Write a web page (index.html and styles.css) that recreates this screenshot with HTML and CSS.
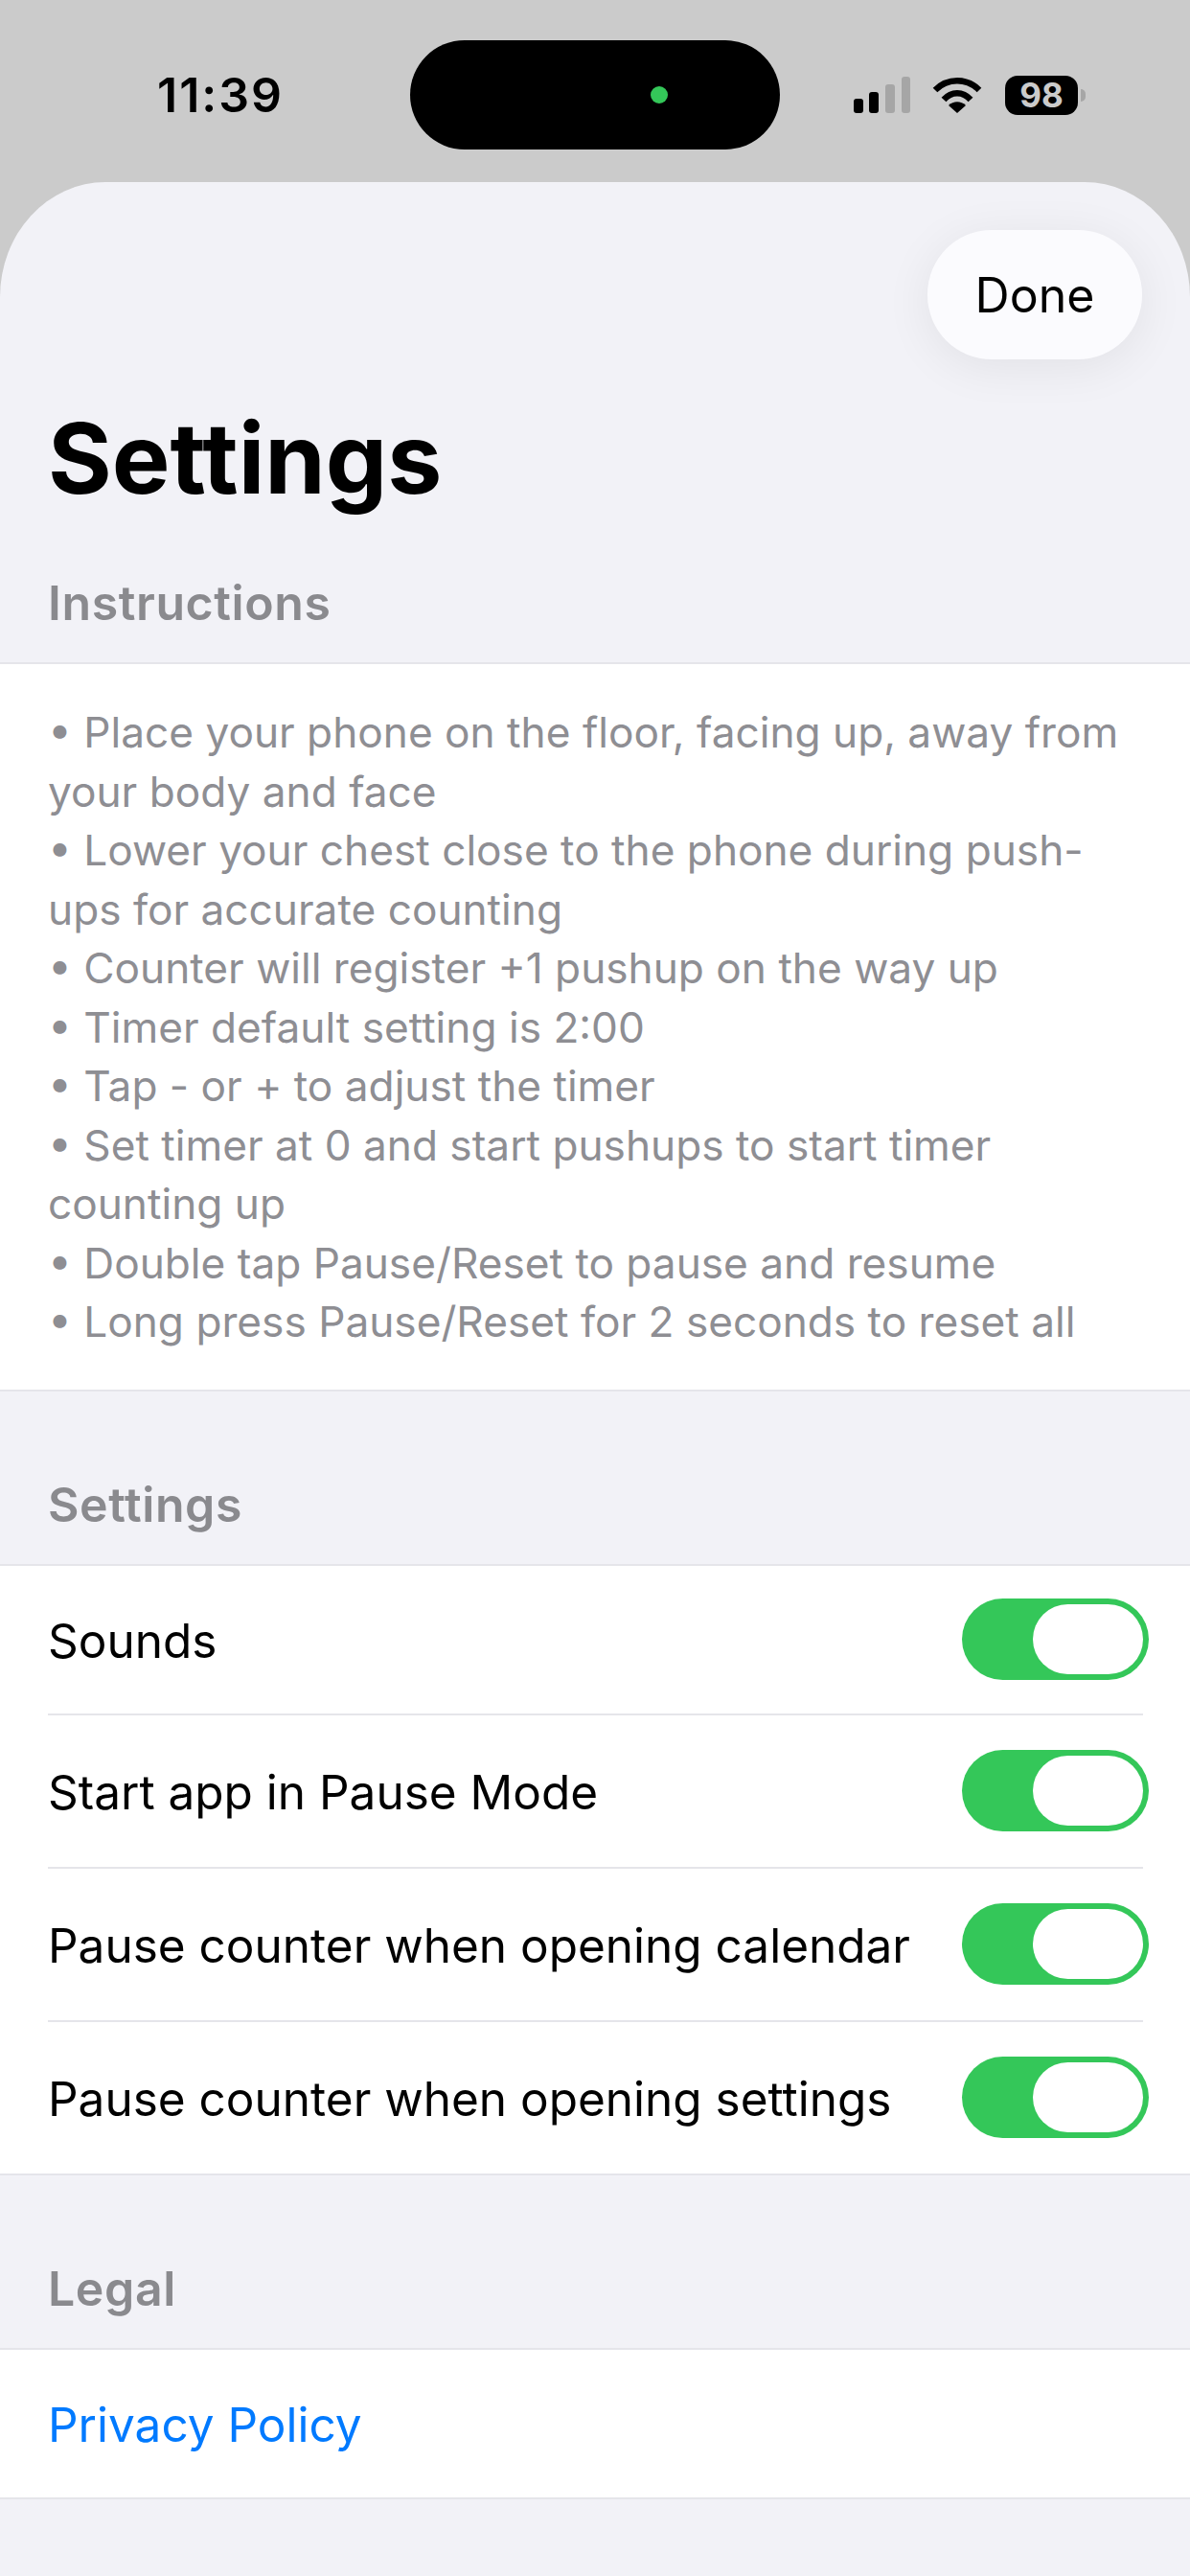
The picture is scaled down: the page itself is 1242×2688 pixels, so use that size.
FILE: index.html
```html
<!DOCTYPE html>
<html lang="en">
<head>
    <meta charset="UTF-8">
    <meta name="viewport" content="width=device-width, initial-scale=1.0">
    <title>Settings</title>
    <link rel="stylesheet" href="styles.css">
</head>
<body>
    <div class="status-bar">
        <span class="time">11:39</span>
        <div class="island"><span class="island-dot"></span></div>
        <div class="status-icons">
            <svg class="signal" width="59" height="38" viewBox="0 0 59 38">
                <rect x="0" y="23" width="10" height="15" rx="3" fill="#000"/>
                <rect x="16" y="16" width="10" height="22" rx="3" fill="#000"/>
                <rect x="33" y="8" width="10" height="30" rx="3" fill="#a6a6a6"/>
                <rect x="50" y="0" width="9" height="38" rx="3" fill="#a6a6a6"/>
            </svg>
            <svg class="wifi" width="52" height="38" viewBox="0 0 52 38">
                <path d="M3 14 C16 1 36 1 49 14" fill="none" stroke="#000" stroke-width="6.5"/>
                <path d="M12 24 C20 15 32 15 40 24" fill="none" stroke="#000" stroke-width="6.5"/>
                <path d="M26 38 L17 30 C22 25 30 25 35 30 Z" fill="#000"/>
            </svg>
            <div class="battery"><span class="battery-level">98</span></div>
            <span class="battery-nub"></span>
        </div>
    </div>

    <div class="sheet">
        <button class="done-button">Done</button>
        <h1 class="title">Settings</h1>

        <h2 class="section-label">Instructions</h2>
        <div class="group instructions">
            <p>• Place your phone on the floor, facing up, away from your body and face</p>
            <p>• Lower your chest close to the phone during push-ups for accurate counting</p>
            <p>• Counter will register +1 pushup on the way up</p>
            <p>• Timer default setting is 2:00</p>
            <p>• Tap - or + to adjust the timer</p>
            <p>• Set timer at 0 and start pushups to start timer counting up</p>
            <p>• Double tap Pause/Reset to pause and resume</p>
            <p>• Long press Pause/Reset for 2 seconds to reset all</p>
        </div>

        <h2 class="section-label">Settings</h2>
        <div class="group">
            <div class="row">
                <span class="row-label">Sounds</span>
                <div class="toggle"><span class="knob"></span></div>
            </div>
            <div class="row">
                <span class="row-label">Start app in Pause Mode</span>
                <div class="toggle"><span class="knob"></span></div>
            </div>
            <div class="row">
                <span class="row-label">Pause counter when opening calendar</span>
                <div class="toggle"><span class="knob"></span></div>
            </div>
            <div class="row">
                <span class="row-label">Pause counter when opening settings</span>
                <div class="toggle"><span class="knob"></span></div>
            </div>
        </div>

        <h2 class="section-label">Legal</h2>
        <div class="group">
            <div class="row"><a class="row-label" href="#">Privacy Policy</a></div>
        </div>
    </div>
</body>
</html>
```

FILE: styles.css
```css
body {
    margin: 0;
    height: 2688px;
    overflow: hidden;
    background-color: #cbcbcb;
    font-family: 'Inter', 'Liberation Sans', sans-serif;
    color: #000;
}

.status-bar {
    display: flex;
    align-items: center;
    height: 190px;
    padding-top: 8px;
    box-sizing: border-box;
}

.time {
    width: 428px;
    padding-left: 164px;
    box-sizing: border-box;
    font-size: 50px;
    font-weight: 600;
    letter-spacing: 2px;
}

.island {
    display: flex;
    align-items: center;
    width: 386px;
    height: 114px;
    border-radius: 57px;
    background-color: #000;
}

.island-dot {
    width: 18px;
    height: 18px;
    margin-left: 251px;
    border-radius: 50%;
    background-color: #34c759;
}

.status-icons {
    display: flex;
    align-items: center;
    margin-left: 77px;
}

.wifi {
    margin-left: 23px;
}

.battery {
    display: flex;
    justify-content: center;
    align-items: center;
    width: 76px;
    height: 41px;
    margin-left: 24px;
    border-radius: 13px;
    background-color: #000;
}

.battery-level {
    color: #cbcbcb;
    font-size: 35px;
    font-weight: 700;
}

.battery-nub {
    width: 5px;
    height: 13px;
    margin-left: 3px;
    border-radius: 0 6px 6px 0;
    background-color: #a6a6a6;
}

.sheet {
    position: relative;
    height: 2498px;
    border-radius: 110px 110px 0 0 / 120px 120px 0 0;
    background-color: #f2f2f7;
    overflow: hidden;
}

.done-button {
    position: absolute;
    top: 50px;
    right: 50px;
    width: 224px;
    height: 135px;
    border: none;
    border-radius: 67px;
    background-color: #fbfbfe;
    box-shadow: 0 8px 50px rgba(0, 0, 0, 0.07);
    color: #000;
    font-family: inherit;
    font-size: 50px;
}

.title {
    margin: 0;
    padding: 226px 50px 0;
    font-size: 102px;
    line-height: 124px;
    font-weight: 700;
}

.section-label {
    margin: 0;
    padding: 59px 50px 32px;
    color: #8a8a8e;
    font-size: 50px;
    line-height: 60px;
    font-weight: 600;
    letter-spacing: 0.6px;
}

.group {
    border-top: 2px solid #e5e5ea;
    border-bottom: 2px solid #e5e5ea;
    background-color: #fff;
    margin-bottom: 29px;
}

.instructions {
    padding: 41px 50px 39px;
    color: #8e8e93;
    font-size: 44.2px;
    line-height: 61.5px;
}

.instructions p {
    margin: 0;
}

.row {
    display: flex;
    justify-content: space-between;
    align-items: center;
    height: 158px;
    margin-left: 50px;
    margin-right: 49px;
    border-bottom: 2px solid #e5e5ea;
    font-size: 49.5px;
}

.row:first-child {
    height: 154px;
}

.row:last-child {
    border-bottom: none;
}

.row-label {
    padding-top: 2px;
}

a.row-label {
    color: #007aff;
    text-decoration: none;
}

.toggle {
    display: flex;
    justify-content: flex-end;
    align-items: center;
    width: 195px;
    height: 85px;
    margin-right: -6px;
    padding-right: 6px;
    box-sizing: border-box;
    border-radius: 43px;
    background-color: #34c759;
}

.knob {
    width: 115px;
    height: 73px;
    border-radius: 37px;
    background-color: #fff;
}
```
